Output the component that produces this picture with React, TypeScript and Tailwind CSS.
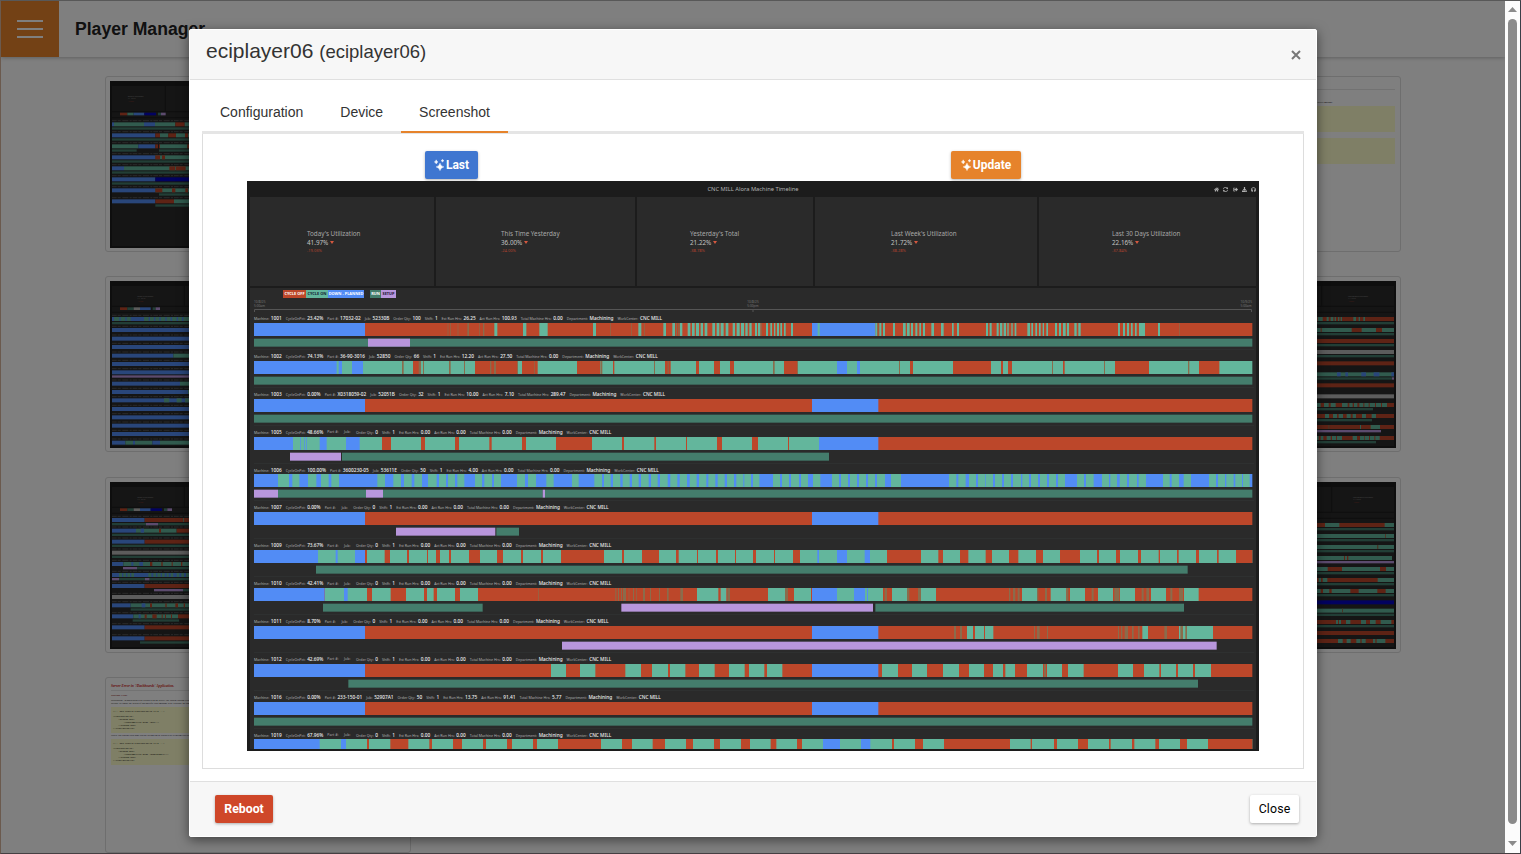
import { FaHome, FaSyncAlt, FaSignOutAlt, FaDownload, FaHeadphones } from "react-icons/fa";

const COLORS: Record<string, string> = {
  r: "#bc472a",
  g: "#63b69c",
  b: "#528cf5",
  d: "#8a6c4c",
  k: "#447d6c",
  p: "#b896dc",
  n: "#0505c0",
  w: "#b9b9b9",
};

type Seg = { c: string; x: number; w: number };

/** Reads runs such as "r 0-100 g 20-30 40-50"; a letter sets the colour of the ranges after it. */
function parse(runs: string): Seg[] {
  const out: Seg[] = [];
  let c = "r";
  for (const t of runs.split(" ")) {
    if (t in COLORS) c = t;
    else if (t) {
      const [a, b] = t.split("-").map(Number);
      out.push({ c: COLORS[c], x: a, w: b - a });
    }
  }
  return out;
}

function Bars({ runs, y, h }: { runs: string; y: number; h: number }) {
  return (
    <>
      {parse(runs).map((s, i) => (
        <rect key={i} x={s.x} y={y} width={s.w} height={h} fill={s.c} />
      ))}
    </>
  );
}

type Machine = {
  id: string; pct: string; part?: string; job?: string; qty?: string;
  est?: string; act?: string; total?: string; bar: string; sub: string;
};

const PLAIN = "r 21-3016 b 21-354 1695-1894";
const FULL = "k 21-3016";

const MACHINES: Machine[] = [
  { id: "1001", pct: "23.42%", part: "17032-02", job: "52330B", qty: "100", est: "26.25", act: "100.93",
    bar: "r 21-3016 b 21-354 d 602-604 610-612 632-634 661-666 697-699 708-712 1090-1092 1152-1154 1191-1193 g 742-751 828-838 877-902 1038-1047 1174-1183 1249-1257 1276-1284 d 1287-1290 1294-1298 g 1299-1306 1322-1330 1335-1343 1347-1356 1361-1368 1373-1381 1396-1404 1409-1417 1421-1430 1436-1444 1457-1464 1469-1478 1482-1491 1495-1502 1507-1514 1524-1530 1533-1540 1557-1563 1570-1575 1581-1585 1590-1596 1600-1605 1611-1616 1632-1638 b 1695-1885 g 1712-1718 1885-1891 1897-1903 1908-1914 1938-1944 1968-1976 1980-1988 1992-1998 2005-2011 2017-2022 2028-2034 2053-2061 2082-2090 2115-2120 2130-2136 2217-2223 2228-2234 2249-2255 2259-2266 2270-2277 2281-2285 2293-2297 2303-2308 2341-2349 2353-2358 2365-2370 2376-2381 2387-2391 2398-2403 2424-2430 2436-2442 2448-2456 2460-2466 2482-2489 2494-2501 2613-2619 2628-2634 2640-2646 2652-2657 2664-2669 2676-2694 2733-2739 d 1891-1894 1542-1544 2797-2799",
    sub: "k 21-3016 p 363-489" },
  { id: "1002", pct: "74.13%", part: "36-90-3016", job: "52850", qty: "66", est: "12.20", act: "27.50",
    bar: "g 21-3016 b 21-269 275-285 315-348 1770-1800 1830-1839 r 498-521 684-811 825-872 990-1060 1098-1102 1254-1271 1347-1356 1401-1419 1449-1461 1611-1650 1989-1998 2118-2232 2262-2268 2283-2295 2448-2453 2604-2706 2856-2917 d 465-470 515-521 528-531 606-611 651-654 729-733 741-747 810-813 862-864 1061-1066 1221-1224 1262-1265 1578-1583 1650-1653 1956-1959 2415-2418 2571-2574 2823-2827",
    sub: FULL },
  { id: "1003", pct: "0.00%", part: "X0318059-02", job: "52051B", qty: "32", est: "10.00", act: "7.10", total: "289.47", bar: PLAIN, sub: FULL },
  { id: "1005", pct: "48.66%",
    bar: "r 21-3016 g 138-1740 b 21-138 218-239 297-338 160-162 172-174 178-180 1716-1894 r 405-432 522-534 624-636 727-734 825-837 927-1035 1125-1131 1222-1227 1317-1320 1410-1425 1515-1533 1623-1626",
    sub: "p 129-282 k 285-1746" },
  { id: "1006", pct: "100.00%", part: "3600230-05", job: "53611E", qty: "50", est: "4.00",
    bar: "b 21-3016 g 93-126 136-157 183-208 222-245 253-276 391-414 439-462 471-494 502-525 543-569 576-597 603-624 631-652 684-705 712-735 741-762 810-834 843-867 898-920 975-995 1042-1065 1071-1091 1098-1120 1127-1148 1155-1175 1182-1205 1212-1232 1239-1262 1270-1291 1298-1320 1328-1349 1356-1378 1384-1405 1412-1433 1440-1461 1468-1489 1492-1512 1518-1537 1578-1599 1605-1626 1632-1656 1662-1683 1698-1720 1755-1776 1782-1803 1809-1830 1836-1857 1863-1884 1890-1914 1932-1962 2106-2128 2134-2156 2166-2187 2193-2215 2217-2238 2244-2265 2271-2292 2298-2322 2326-2346 2352-2373 2379-2400 2406-2427 2433-2454 2490-2511 2517-2540 2565-2586 2590-2610 2618-2640 2646-2670 2675-2697 2748-2768 2774-2796 2810-2832 2886-2907 2913-2934 2938-2960 2965-2985 2988-3008",
    sub: "p 21-93 k 93-357 p 357-408 k 408-887 p 887-894 k 894-3016" },
  { id: "1007", pct: "0.00%", bar: PLAIN, sub: "p 447-745 k 748-816" },
  { id: "1009", pct: "73.67%",
    bar: "g 21-3016 b 21-213 266-272 324-354 1711-1716 1770-1800 1853-1869 r 354-360 413-429 480-486 540-543 567-579 606-612 666-699 750-768 822-828 882-888 942-1071 1125-1131 1185-1236 1287-1295 1350-1353 1407-1413 1464-1467 1518-1527 1581-1584 1638-1659 1920-2022 2074-2088 2139-2164 2216-2235 2286-2314 2367-2388 2439-2499 2550-2556 2607-2619 2673-2682 2735-2739 2790-2795 2847-2856 2910-2915 2967-3016",
    sub: "k 207-2822" },
  { id: "1010", pct: "42.41%",
    bar: "r 21-3016 b 21-233 g 234-360 375-431 477-531 540-560 570-624 639-693 1350-1414 1421-1438 1563-1614 1641-1692 1770-1821 1854-1908 1935-1980 2022-2067 2325-2370 2411-2458 2469-2514 2553-2598 2619-2664 2712-2757 2811-2855 b 291-302 1695-1770 1821-1854 1860-1863 d 873-875 1105-1108 1113-1116 1122-1125 1128-1137 1145-1147 1158-1161 1167-1169 1188-1194 1209-1212 1236-1239 1260-1265 1300-1308 1441-1449 1614-1623 1913-1920 1980-1987 2013-2022 2286-2290 2298-2305 2312-2318 2370-2374 2394-2400 2458-2464 2534-2540 2602-2617 2684-2690 2698-2706 2770-2776 2796-2808",
    sub: "k 228-707 p 1123-1878 k 1885-2811" },
  { id: "1011", pct: "8.70%",
    bar: "r 21-3016 b 21-354 1695-1894 g 2160-2178 2184-2211 2214-2239 2686-2703 2796-2898 d 2121-2127 2139-2145 2361-2364 2370-2378 2400-2403 2613-2616 2622-2626 2633-2643 2655-2660 2673-2678 2752-2760 2800-2808 2815-2820",
    sub: "p 945-2909" },
  { id: "1012", pct: "42.69%",
    bar: "r 21-3016 b 21-354 1695-1894 g 912-957 999-1045 1135-1182 1215-1263 1269-1315 1356-1403 1446-1493 1506-1552 1560-1606 1905-1953 1995-2040 2088-2136 2166-2211 2238-2268 2275-2304 2340-2388 2400-2445 2463-2510 2613-2658 2691-2737 2742-2787 2793-2838 2844-2892 d 2391-2397",
    sub: "k 304-2853" },
  { id: "1016", pct: "0.00%", part: "233-150-01", job: "52907A1", qty: "50", est: "13.75", act: "91.41", total: "5.77", bar: PLAIN, sub: FULL },
  { id: "1019", pct: "67.96%",
    bar: "g 21-3016 b 21-218 282-297 1728-1779 1842-1870 r 360-366 430-484 547-555 618-645 708-717 780-795 858-870 933-1062 1125-1155 1217-1254 1317-1338 1401-1419 1482-1509 1571-1588 1650-1665 1935-1941 2004-2028 2091-2289 2351-2355 2421-2430 2493-2523 2586-2591 2655-2662 2725-2736 2799-2820 2883-3016",
    sub: "" },
];

const KPIS = [
  { t: "Today's Utilization", v: "41.97%", d: "-19.03%", cls: "w-[184px] pl-[57px]" },
  { t: "This Time Yesterday", v: "36.00%", d: "-24.00%", cls: "w-[199px] pl-[65px]" },
  { t: "Yesterday's Total", v: "21.22%", d: "-38.78%", cls: "w-[176px] pl-[53px]" },
  { t: "Last Week's Utilization", v: "21.72%", d: "-38.28%", cls: "w-[222px] pl-[76px]" },
  { t: "Last 30 Days Utilization", v: "22.16%", d: "-37.84%", cls: "w-[217px] pl-[73px]" },
];

function Field({ label, value = "" }: { label: string; value?: string }) {
  return (
    <span className="flex items-baseline gap-[1.7px]">
      <span className="text-[3.55px] text-[#b0b0b0]">{label}:</span>
      <span className="text-[4.75px] font-medium text-[#efefef]">{value}</span>
    </span>
  );
}

function MachineRow({ m }: { m: Machine }) {
  return (
    <div className="h-[37.85px] shrink-0 pl-[4px]">
      <div className="flex h-[10.6px] items-center gap-[4px] whitespace-nowrap pt-[1.6px] leading-none">
        <Field label="Machine" value={m.id} />
        <Field label="CycleOnPct" value={m.pct} />
        <Field label="Part #" value={m.part} />
        <Field label="Job" value={m.job} />
        <Field label="Order Qty" value={m.qty ?? "0"} />
        <Field label="Shift" value="1" />
        <Field label="Est Run Hrs" value={m.est ?? "0.00"} />
        <Field label="Act Run Hrs" value={m.act ?? "0.00"} />
        <Field label="Total Machine Hrs" value={m.total ?? "0.00"} />
        <Field label="Department" value="Machining" />
        <Field label="WorkCenter" value="CNC MILL" />
      </div>
      <svg className="block h-[27px] w-[1002px]" viewBox="21 0 3006 81" preserveAspectRatio="none">
        <Bars runs={m.bar} y={0} h={39} />
        <Bars runs={m.sub} y={47} h={24} />
        <rect x={21} y={79} width={3000} height={2} fill="#313333" />
      </svg>
    </div>
  );
}

function AxisLabel({ a, b }: { a: string; b: string }) {
  return (
    <div className="text-[3.2px] leading-[3.8px] text-[#777]">
      <div>{a}</div>
      <div>{b}</div>
    </div>
  );
}

function Timeline() {
  return (
    <div className="flex h-[570px] w-[1012px] flex-col overflow-hidden bg-[#1c1c1c] font-['Noto_Sans','Open_Sans',sans-serif]">
      <div className="grid h-[16px] shrink-0 grid-cols-3 items-center px-[3px]">
        <span />
        <span className="pt-[1px] text-center text-[5.75px] leading-[7px] text-[#b4b4b4]">CNC MILL Alora Machine Timeline</span>
        <span className="flex items-center justify-end gap-[4.2px] text-[5px] text-[#b0b0b0]">
          <FaHome /><FaSyncAlt /><FaSignOutAlt /><FaDownload /><FaHeadphones />
        </span>
      </div>
      <div className="flex h-[89px] shrink-0 gap-[2px] pl-[3px]">
        {KPIS.map((k) => (
          <div key={k.t} className={`flex shrink-0 flex-col bg-[#2a2a2a] pt-[32px] ${k.cls}`}>
            <span className="text-[6.3px] leading-[9px] text-[#a8a8a8]">{k.t}</span>
            <span className="flex items-center gap-[1.5px] text-[6.3px] leading-[9px] text-[#c2c2c2]">
              {k.v}
              <svg className="h-[3px] w-[4px]" viewBox="0 0 4 3"><path d="M0 0h4L2 3z" fill="#d4583f" /></svg>
            </span>
            <span className="text-[4px] leading-[7px] text-[#b5442f]">{k.d}</span>
          </div>
        ))}
      </div>
      <div className="ml-[3px] mt-[2px] flex h-[461px] w-[1006px] shrink-0 flex-col overflow-hidden bg-[#2a2a2a]">
        <div className="flex h-[11px] shrink-0 items-start pl-[33px] pt-[2.4px] text-[3.9px] font-bold leading-[8px]">
          <span className="w-[23px] bg-[#bc472a] text-center text-white">CYCLE OFF</span>
          <span className="w-[22px] bg-[#63b69c] text-center text-[#123]">CYCLE ON</span>
          <span className="mr-[6px] w-[36px] bg-[#528cf5] text-center text-white">DOWN - PLANNED</span>
          <span className="w-[11px] bg-[#447d6c] text-center text-white">RUN</span>
          <span className="w-[15px] bg-[#b896dc] text-center text-[#213]">SETUP</span>
        </div>
        <div className="ml-[4px] mt-[2px] flex h-[7.5px] w-[998px] shrink-0 justify-between">
          <AxisLabel a="10/8/25" b="5:00am" />
          <AxisLabel a="10/8/25" b="5:00pm" />
          <AxisLabel a="10/9/25" b="5:00am" />
        </div>
        <svg className="ml-[4px] block h-[4px] w-[998px] shrink-0" viewBox="0 0 998 4">
          <path d="M.5 3V.5h997V3M499 .5V3" fill="none" stroke="#555" />
        </svg>
        {MACHINES.map((m) => <MachineRow key={m.id} m={m} />)}
      </div>
    </div>
  );
}

type ThumbRow = [number, string, string];

const THUMB_A: ThumbRow[] = [
  [124, "b 6-12 g 12-102 b 102-135 g 135-196 r 196-224 g 224-882", "k 6-882"],
  [157, "b 6-136 r 136-150 g 150-175 r 175-198 g 198-225 r 225-234 g 234-882", "k 6-882"],
  [190, "g 6-85 b 85-136 r 136-144 147-150 g 150-232 r 232-882", "k 6-80 147-882"],
  [223, "b 6-136 g 136-882 r 136-150 156-165", "k 6-882"],
  [256, "b 6-42 g 42-882 r 178-195 197-227", "k 6-882"],
  [289, "b 6-136 n 136-882", "k 6-882"],
  [322, "b 6-136 g 136-882 r 136-157 186-196 226-234", "k 147-882"],
  [355, "b 6-136 r 136-192 g 192-882", "k 136-882"],
];

const THUMB_B: ThumbRow[] = [
  [108, "b 6-882 g 12-28 32-46 50-62 102-116 120-132 136-148 152-166 170-182 186-200 204-216 220-237", "k 6-882"],
  [141, "b 6-882", ""], [167, "b 6-882", ""], [192, "b 6-882", ""],
  [218, "b 6-190 g 190-882", ""], [243, "b 6-882", ""],
  [268, "b 6-882", "p 6-882"],
  [302, "b 6-210 g 210-882", ""], [327, "b 6-234 g 234-882", ""],
  [352, "b 6-882 g 162-178 200-215 225-882", ""],
  [378, "b 6-882", ""], [403, "b 6-882", ""], [428, "b 6-882", ""], [453, "b 6-882", ""],
  [479, "b 6-46 g 46-69 b 69-75 g 75-127 b 127-150 g 150-882", ""],
];

const THUMB_C: ThumbRow[] = [
  [108, "b 6-104 r 104-882 g 220-222", "k 6-882 p 108-144"],
  [140, "b 6-78 g 78-200 b 92-102 r 147-153 200-882", "k 6-882"],
  [173, "b 6-104 r 104-882", "k 6-882"],
  [206, "w 6-882", "k 6-882"],
  [240, "b 6-40 g 40-882 b 64-70 88-99 r 120-127 154-158 185-188 213-217", "p 39-81 k 81-882"],
  [273, "b 6-882 g 27-36 40-48 52-60 64-72 115-124 130-138 142-152 156-164 170-176 182-190 200-208 214-222 228-237", "p 6-27 k 27-105 p 105-119 k 119-882"],
  [306, "b 6-104 r 104-882", "p 132-219 k 219-882"],
  [339, "w 6-882", ""],
  [364, "b 6-62 g 62-882 b 95-106 r 120-126 166-170 196-204 221-225", "k 62-882"],
  [397, "b 6-70 g 70-204 b 86-92 r 104-110 127-140 155-158 165-168 183-186 204-882", "k 68-207"],
  [430, "b 6-104 r 104-882", ""],
  [463, "b 6-104 r 104-882", "k 90-882"],
];

const THUMB_D: ThumbRow[] = [
  [108, "r 6-882 g 653-668 680-686 692-700 704-708 714-718 722-726 760-768 776-780 790-795", "k 6-882"],
  [141, "g 6-882 r 662-665 755-785 828-846", "k 6-882"],
  [174, "r 6-882", "k 6-882"],
  [207, "w 6-882", "k 6-882"],
  [241, "r 6-882", ""],
  [274, "g 6-882 b 711-722 736-744 784-798 821-838 874-882", "k 6-876 p 876-882"],
  [307, "r 6-882", ""],
  [340, "w 6-882", ""],
  [366, "r 6-882 g 651-662 672-686 692-707 726-743 748-758 762-772 778-790 793-806 809-825 828-843 846-861", "k 6-819"],
  [399, "r 6-882 g 675-687 699-711 716-729 740-752 758-768 786-798 815-828", "k 6-816"],
  [432, "r 6-882 d 685-688 g 780-783 812-840", "p 6-843"],
  [465, "r 6-882 g 651-656 662-670 680-692 696-708 711-726 758-771 780-792 794-807 810-823 826-839", "k 6-828"],
];

const THUMB_E: ThumbRow[] = [
  [123, "r 6-882 g 675-718 854-882", "k 6-882"],
  [156, "g 6-882 r 855-857", "k 6-882"],
  [189, "g 6-882 d 831-835", "k 6-882"],
  [222, "g 6-876 r 732-735 741-745", "p 6-882"],
  [255, "g 6-882 r 683-726 840-858", "k 6-882"],
  [288, "g 6-882 r 651-656 663-668 682-833", "k 6-882"],
  [321, "g 6-882 r 662-669 688-695 751-776 832-857", "k 6-882"],
  [355, "n 6-882", ""],
  [380, "g 6-882 d 726-729", "k 6-882"],
  [414, "r 6-882 g 708-714 717-723 738-751 783-798 810-827 842-874", "k 6-882"],
  [447, "r 6-882", ""],
  [471, "r 6-882 g 714-728 740-752 769-781 785-797 819-826 830-856", ""],
];

const LEGEND_A = "r 30-52 g 52-71 b 71-103 n 103-138 k 144-153 p 153-167";
const LEGEND_B = "r 30-52 k 52-71 w 71-90 b 90-122 k 128-137 p 137-150";
const LEGEND_C = "r 30-52 k 52-71 w 71-90 b 90-122 n 122-156 k 162-172 p 172-186";

type ThumbProps = { rows: ThumbRow[]; labelX: number; divider: number; label: string; legend?: string };

function Thumb({ rows, labelX, divider, label, legend = "" }: ThumbProps) {
  const top = rows[0][0];
  return (
    <svg className="block h-[167px] w-[296px] font-['Noto_Sans',sans-serif]" viewBox="0 0 888 501" preserveAspectRatio="none">
      <rect width={888} height={501} fill="#1c1c1c" />
      <rect x={6} y={15} width={876} height={480} fill="#2a2a2a" />
      <path d={`M6 ${top - 32}h876M${divider} 15V${top - 32}M6 ${top - 14}h876`} stroke="#1e1e1e" strokeWidth={3} />
      <g fill="#8a8a8a" fontSize={6}>
        <text x={labelX} y={48} textLength={label.length * 2.5}>{label}</text>
        <text x={labelX} y={55} textLength={24}>41.97%</text>
        <text x={labelX} y={63} fill="#8a3a2a" fontSize={5}>-19.03%</text>
      </g>
      <Bars runs={legend} y={top - 29} h={8} />
      {rows.map(([y, bar, sub]) => (
        <g key={y}>
          <path d={`M6 ${y - 5}h231`} stroke="#666" strokeWidth={3} strokeDasharray="14 3 9 5 18 4 6 3" opacity={0.7} />
          <Bars runs={bar} y={y} h={12} />
          <Bars runs={sub} y={y + 15} h={7} />
        </g>
      ))}
    </svg>
  );
}

function CodeBox({ mode }: { mode: string }) {
  return (
    <pre className="h-[26px] w-full overflow-hidden bg-[#ffffcc] pl-[2px] pt-[4px] font-['Liberation_Mono',monospace] text-[2.25px] leading-[2.9px] text-black">
      {`<!-- Web.Config Configuration File -->\n\n<configuration>\n    <system.web>\n        <customErrors mode="${mode}"/>\n    </system.web>\n</configuration>`}
    </pre>
  );
}

function ErrorPage({ texts }: { texts: boolean }) {
  return (
    <div className="flex h-[166px] w-[296px] flex-col overflow-hidden px-[1px] font-['Liberation_Serif',serif] text-[2.4px] leading-[3px]">
      <div className="h-[8.5px] shrink-0 border-b border-[#e4e4e4] pt-[2px] text-[3.6px] font-bold italic leading-[5px] text-[#d02020]">
        {texts && "Server Error in '/Dashboards' Application."}
      </div>
      <div className="h-[8px] shrink-0 pt-[3px] text-[2.8px] italic text-[#800000]">{texts && "Runtime Error"}</div>
      <div className="h-[8px] shrink-0 whitespace-nowrap text-black">
        <div className="h-[3px]">{texts && "Description: An application error occurred on the server. The current custom error settings for this application prevent the details from being viewed remotely."}</div>
        <div className={texts ? "" : "pl-[205px]"}>
          {texts ? "Details: To enable the details of this specific error message to be viewable on remote machines, please create a <customErrors> tag." : "on the local server machine."}
        </div>
      </div>
      <CodeBox mode="Off" />
      <div className="h-[6px] shrink-0 whitespace-nowrap pt-[1px] text-[#001]">
        {texts && "Notes: The current error page you are seeing can be replaced by a custom error page by modifying the defaultRedirect attribute."}
      </div>
      <CodeBox mode="RemoteOnly" />
    </div>
  );
}

function Card({ children }: { children: React.ReactNode }) {
  return <div className="h-[176px] w-[306px] rounded-[3px] border border-[#dcdcdc] p-[4px]">{children}</div>;
}

function Sparkles() {
  return (
    <svg className="h-[12px] w-[11px]" viewBox="0 0 11 12" fill="white">
      <path d="M6 4.200Q6.600 7.200 9.800 7.900Q6.600 8.600 6 11.600Q5.400 8.600 2.200 7.900Q5.400 7.200 6 4.200z" stroke="white" strokeWidth={0.5} />
      <path d="M2.200 .8Q2.500 2.500 4 2.900Q2.500 3.300 2.200 5Q1.900 3.300 .3 2.900Q1.900 2.500 2.200 .8zM8.500 .2Q8.700 1.400 10 1.700Q8.700 2 8.500 3.200Q8.300 2 7 1.700Q8.300 1.400 8.500 .2z" stroke="white" strokeWidth={0.4} />
    </svg>
  );
}

function Page() {
  return (
    <div className="flex h-full w-full flex-col bg-white">
      <header className="flex h-[56px] shrink-0 items-center shadow-[0_1px_4px_rgba(0,0,0,0.25)]">
        <div className="flex h-full w-[58px] flex-col items-center justify-center gap-[6px] bg-[#e6832b]">
          <i className="h-[2px] w-[26px] bg-white" />
          <i className="h-[2px] w-[26px] bg-white" />
          <i className="h-[2px] w-[26px] bg-white" />
        </div>
        <h1 className="pl-[16px] text-[17.6px] font-bold text-[#222]">Player Manager</h1>
      </header>
      <main className="flex flex-col gap-[24.4px] pl-[104px] pr-[104px] pt-[19px]">
        <div className="flex justify-between">
          <Card><Thumb rows={THUMB_A} labelX={53} divider={166} label="Today's Utilization" legend={LEGEND_A} /></Card>
          <Card><ErrorPage texts={false} /></Card>
        </div>
        <div className="flex justify-between">
          <Card><Thumb rows={THUMB_B} labelX={82} divider={223} label="Today's Utilization" legend={LEGEND_B} /></Card>
          <Card><Thumb rows={THUMB_D} labelX={744} divider={665} label="Last 30 Days Utilization" /></Card>
        </div>
        <div className="flex justify-between">
          <Card><Thumb rows={THUMB_C} labelX={82} divider={223} label="Today's Utilization" legend={LEGEND_C} /></Card>
          <Card><Thumb rows={THUMB_E} labelX={759} divider={695} label="Last 30 Days Utilization" /></Card>
        </div>
        <Card><ErrorPage texts /></Card>
      </main>
    </div>
  );
}

function Modal() {
  return (
    <section className="absolute left-[188px] top-[28px] flex h-[808px] w-[1128px] flex-col rounded-[2px] border border-white bg-white shadow-[0_3px_12px_rgba(0,0,0,0.5)]">
      <header className="flex h-[50px] shrink-0 items-center justify-between border-b border-[#e0e0e0] bg-[#f7f7f7] pl-[16px] pr-[15px]">
        <h2 className="-mt-[8px] text-[21px] leading-none text-[#333]">
          eciplayer06 <span className="text-[18.5px]">(eciplayer06)</span>
        </h2>
        <svg className="h-[10px] w-[10px]" viewBox="0 0 10 10">
          <path d="M1 1l8 8M9 1L1 9" stroke="#777" strokeWidth={2} />
        </svg>
      </header>
      <div className="flex grow flex-col px-[12px] pb-[12px] pt-[12px]">
        <nav className="flex h-[42px] shrink-0 border-b-[3px] border-[#e5e5e5] text-[14px] leading-[40px] text-[#333]">
          <span className="pl-[18px] pr-[19px]">Configuration</span>
          <span className="px-[18px]">Device</span>
          <span className="h-[41px] border-b-2 border-[#e6832b] px-[18px]">Screenshot</span>
        </nav>
        <div className="flex grow flex-col items-center border border-t-0 border-[#ddd]">
          <div className="flex h-[47px] w-full shrink-0 items-end pb-[2px]">
            <button className="ml-[222px] flex h-[28px] w-[53px] items-center justify-center gap-[1px] rounded-[2px] bg-[#3f76d0] font-['Roboto',sans-serif] text-[12px] font-bold text-white shadow-[0_1px_3px_rgba(0,0,0,0.3)]">
              <Sparkles />Last
            </button>
            <button className="ml-[473px] flex h-[28px] w-[70px] items-center justify-center gap-[1px] rounded-[2px] bg-[#e6832b] font-['Roboto',sans-serif] text-[12px] font-bold text-white shadow-[0_1px_3px_rgba(0,0,0,0.3)]">
              <Sparkles />Update
            </button>
          </div>
          <Timeline />
        </div>
      </div>
      <footer className="flex h-[55px] shrink-0 items-center justify-between border-t border-[#e0e0e0] bg-[#f7f7f7] pl-[25px] pr-[17px] font-['Roboto',sans-serif] text-[12.3px]">
        <button className="h-[28px] w-[58px] rounded-[2px] bg-[#cf4729] font-bold text-white shadow-[0_1px_3px_rgba(0,0,0,0.3)]">Reboot</button>
        <button className="h-[28px] w-[49px] rounded-[2px] bg-white tracking-[0.15px] text-black shadow-[0_1px_3px_rgba(0,0,0,0.3)]">Close</button>
      </footer>
    </section>
  );
}

export default function App() {
  return (
    <div className="relative flex h-[854px] w-[1521px] overflow-hidden border border-b-[#453f42] border-l-[#6b5a4e] border-r-[#3a3f48] border-t-[#585858] bg-white font-['Liberation_Sans',Arial,sans-serif]">
      <div className="relative h-full w-[1504px] shrink-0 overflow-hidden">
        <Page />
        <div className="absolute inset-0 bg-black/50" />
      </div>
      <div className="flex h-full w-[15px] shrink-0 flex-col items-center bg-[#fcfcfc]">
        <svg className="mt-[6px] h-[5px] w-[9px]" viewBox="0 0 9 5"><path d="M0 5L4.500 0 9 5z" fill="#8b8b8b" /></svg>
        <div className="mt-[7px] h-[345px] w-[9px] grow rounded-full bg-[#8b8b8b]" />
        <svg className="mb-[7px] mt-[17px] h-[5px] w-[9px]" viewBox="0 0 9 5"><path d="M0 0h9L4.500 5z" fill="#8b8b8b" /></svg>
      </div>
      <Modal />
    </div>
  );
}
